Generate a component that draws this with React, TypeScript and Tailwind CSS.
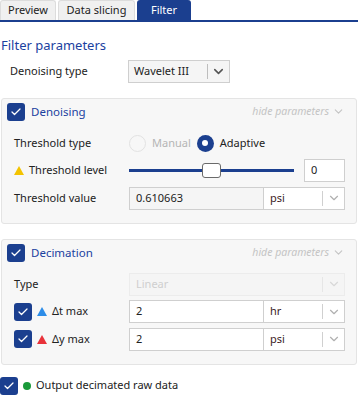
import { Check, ChevronDown } from "lucide-react";

function Box({ className = "" }: { className?: string }) {
  return (
    <span
      className={`flex h-[18px] w-[18px] shrink-0 items-center justify-center rounded-[3px] bg-[#1b3f8f] ${className}`}
    >
      <Check size={12} strokeWidth={2.5} color="white" />
    </span>
  );
}

function Tri({ color }: { color: string }) {
  return (
    <svg width="10" height="9" viewBox="0 0 10 9" className="mr-[5px] shrink-0">
      <polygon points="5,0 10,9 0,9" fill={color} />
    </svg>
  );
}

function UnitInput({ value, unit, disabled }: { value: string; unit: string; disabled?: boolean }) {
  return (
    <div
      className={`flex h-[23px] w-[216px] border border-[#cfcfcf] ${disabled ? "bg-[#f5f5f5]" : "bg-white"}`}
    >
      <div className="flex flex-1 items-center px-[6px] text-[#222]">{value}</div>
      <div className="flex w-[81px] items-center border-l border-[#cfcfcf] bg-white">
        <span className="flex-1 px-[6px] text-[#3b1b24]">{unit}</span>
        <span className="flex h-[15px] w-[22px] items-center justify-center border-l border-[#d0d0d0]">
          <ChevronDown size={14} color="#b0b0b0" />
        </span>
      </div>
    </div>
  );
}

function Panel({ title, children }: { title: string; children: React.ReactNode }) {
  return (
    <div className="mx-[1px] rounded-[3px] border border-[#e4e4e4] bg-[#f7f7f7] pb-[13px] pt-[4px]">
      <div className="flex h-[18px] items-center pl-[5px] pr-[11px]">
        <Box />
        <span className="ml-[6px] text-[11.5px] text-[#1b3f9f]">{title}</span>
        <span className="ml-auto flex items-center text-[10.5px] italic text-[#c4c4c4]">
          hide parameters
          <ChevronDown size={13} className="ml-[3px]" color="#c4c4c4" />
        </span>
      </div>
      <div className="flex flex-col gap-[4.5px] pt-[11px]">{children}</div>
    </div>
  );
}

function Row({ label, children }: { label: React.ReactNode; children: React.ReactNode }) {
  return (
    <div className="flex h-[23px] items-center">
      <div className="flex w-[127px] items-center pl-[12px] text-[#222]">{label}</div>
      {children}
    </div>
  );
}

export default function App() {
  return (
    <div
      className="h-[399px] w-[358px] overflow-hidden bg-white text-[11px]"
      style={{ fontFamily: '"Noto Sans", "Open Sans", sans-serif' }}
    >
      {/* TABS */}
      <div className="flex h-[22px] items-end gap-[2px] border-b-2 border-[#1b3f8f]">
        <div className="flex h-[20px] w-[56px] items-center justify-center rounded-t-[3px] border border-b-0 border-[#dcdcdc] bg-[#f0f0f0] text-[#222]">
          Preview
        </div>
        <div className="flex h-[20px] w-[77px] items-center justify-center rounded-t-[3px] border border-b-0 border-[#dcdcdc] bg-[#f0f0f0] text-[#222]">
          Data slicing
        </div>
        <div className="flex h-[20px] w-[54px] items-center justify-center rounded-t-[3px] bg-[#1b3f8f] text-white">
          Filter
        </div>
      </div>

      <div className="mt-[14px] pl-[1px] text-[13px] text-[#1b3f9f]">Filter parameters</div>

      <div className="mt-[4px] flex h-[24px] items-center">
        <span className="w-[128px] pl-[10px] text-[#222]">Denoising type</span>
        <div className="flex h-[23px] w-[102px] items-center border border-[#cfcfcf] bg-[#f5f5f5]">
          <span className="flex-1 px-[5px] text-[#222]">Wavelet III</span>
          <span className="flex h-[15px] w-[22px] items-center justify-center border-l border-[#bdbdbd]">
            <ChevronDown size={15} strokeWidth={2.5} color="#555" />
          </span>
        </div>
      </div>

      <div className="mt-[14px]">
        <Panel title="Denoising">
          <Row label="Threshold type">
            <span className="h-[17px] w-[17px] rounded-full border border-[#e2e2e2] bg-[#f7f7f7]" />
            <span className="ml-[6px] text-[#b5b5b5]">Manual</span>
            <span className="ml-[6px] flex h-[17px] w-[17px] items-center justify-center rounded-full bg-[#1b3f8f]">
              <span className="h-[6px] w-[6px] rounded-full bg-white" />
            </span>
            <span className="ml-[6px] text-[#222]">Adaptive</span>
          </Row>
          <Row
            label={
              <>
                <Tri color="#f3c300" />
                Threshold level
              </>
            }
          >
            <div className="relative flex h-[23px] w-[165px] items-center">
              <div className="h-[3px] w-full bg-[#1b3f8f]" />
              <div className="absolute left-[73px] top-[4px] h-[15px] w-[19px] rounded-[3px] border border-[#6a6a6a] bg-white" />
            </div>
            <div className="ml-[10px] flex h-[23px] w-[41px] items-center border border-[#cfcfcf] bg-white px-[6px] text-[#222]">
              0
            </div>
          </Row>
          <Row label="Threshold value">
            <UnitInput value="0.610663" unit="psi" disabled />
          </Row>
        </Panel>
      </div>

      <div className="mt-[15px]">
        <Panel title="Decimation">
          <Row label="Type">
            <div className="flex h-[23px] w-[216px] items-center border border-[#ececec] bg-[#f5f5f5]">
              <span className="flex-1 px-[6px] text-[#cfcfcf]">Linear</span>
              <span className="flex h-[15px] w-[22px] items-center justify-center border-l border-[#e6e6e6]">
                <ChevronDown size={14} color="#d8d8d8" />
              </span>
            </div>
          </Row>
          <Row
            label={
              <>
                <Box className="mr-[5px]" />
                <Tri color="#2d8de8" />
                Δt max
              </>
            }
          >
            <UnitInput value="2" unit="hr" />
          </Row>
          <Row
            label={
              <>
                <Box className="mr-[5px]" />
                <Tri color="#e8323a" />
                Δy max
              </>
            }
          >
            <UnitInput value="2" unit="psi" />
          </Row>
        </Panel>
      </div>

      <div className="mt-[12px] flex items-center">
        <Box />
        <span className="ml-[5px] h-[8px] w-[8px] rounded-full bg-[#1a9a3a]" />
        <span className="ml-[5px] text-[#222]">Output decimated raw data</span>
      </div>
    </div>
  );
}
